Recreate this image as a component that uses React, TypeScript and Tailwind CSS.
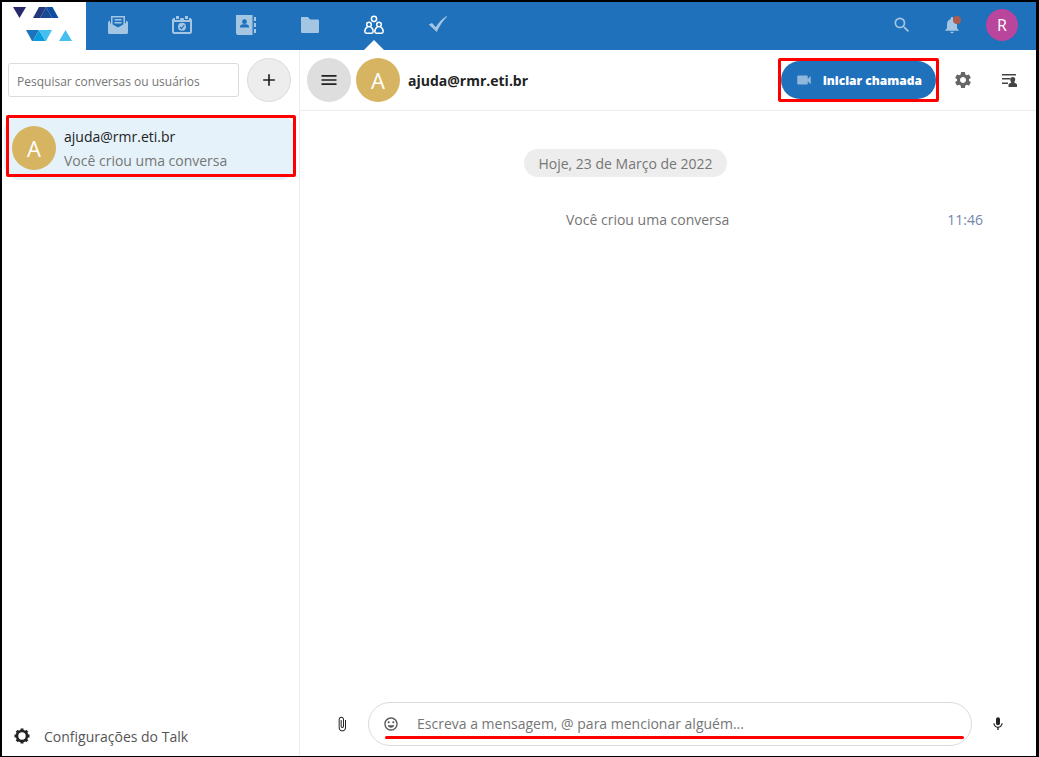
import type { ReactNode } from 'react';
import {
  MdAdd,
  MdAttachFile,
  MdInsertEmoticon,
  MdMenu,
  MdMic,
  MdNotifications,
  MdSearch,
  MdSettings,
  MdVideocam,
} from 'react-icons/md';

function Logo() {
  return (
    <svg viewBox="0 0 60 36" className="h-9 w-15" aria-hidden>
      <path d="M0 1h13L6.500 12z" fill="#27296d" />
      <path d="M26 1h7l-6 11h-7z" fill="#24387c" />
      <path d="M33 1l6 11H27z" fill="#1a4a94" />
      <path d="M33 1h6.500L45.500 12H39z" fill="#0c4da2" />
      <path d="M13 24h13l-6 11h-1z" fill="#1c75bc" />
      <path d="M26 24l6.500 11H20z" fill="#0a9bdc" />
      <path d="M26 24h13l-6 11h-.5z" fill="#45bff0" />
      <path d="M52.500 24L59 35H46z" fill="#45bff0" />
    </svg>
  );
}

function MailIcon() {
  return (
    <svg viewBox="0 0 20 20" className="size-5" fill="currentColor" aria-hidden>
      <path d="M3 1h14v9h-1.500V2.500h-11V10H3z" />
      <path d="M6.500 4h7v1.500h-7zM6.500 7h7v1.500h-7z" />
      <path d="M0 7l2-1.500V8l8 4.500L18 8V5.500L20 7v10.500a1.500 1.500 0 0 1-1.500 1.500h-17A1.500 1.500 0 0 1 0 17.500z" />
    </svg>
  );
}

function CalendarIcon() {
  return (
    <svg viewBox="0 0 20 20" className="size-5" fill="currentColor" aria-hidden>
      <path d="M4 1h3v3H4zM13 1h3v3h-3zM8.500 3h3v2h-3z" />
      <path
        fillRule="evenodd"
        d="M1.500 3H3v2h5V3.500h4V5h5V3h1.500L20 4.500v13L18.500 19h-17L0 17.500v-13zM2 7v10h16V7z"
      />
      <circle cx="10" cy="11.800" r="4" />
      <path d="M8 12l1.500 1.500L12.300 10" fill="none" stroke="#1e71ba" strokeWidth="1.200" />
    </svg>
  );
}

function ContactsIcon() {
  return (
    <svg viewBox="0 0 20 20" className="size-5" fill="currentColor" aria-hidden>
      <path
        fillRule="evenodd"
        d="M0 0h16v20H2a2 2 0 0 1-2-2zM8.500 4.200a2.400 2.400 0 1 0 0 4.900 2.400 2.400 0 0 0 0-4.900zM4 12.500h9v-1c0-1.500-1.500-2-3-2.300h-3c-1.500.3-3 .8-3 2.300z"
      />
      <path d="M16.500 0h.6v20h-.6zM18 2h2v4h-2zM18 8h2v4h-2zM18 14h2v4h-2z" />
    </svg>
  );
}

function FolderIcon() {
  return (
    <svg viewBox="0 0 20 20" className="size-5" fill="currentColor" aria-hidden>
      <path d="M1.500 2H8l2 2.500h8a1 1 0 0 1 1 1V17a1 1 0 0 1-1 1H2a1 1 0 0 1-1-1V2.500z" />
    </svg>
  );
}

function PeopleIcon() {
  return (
    <svg viewBox="0 0 20 20" className="size-5" fill="none" stroke="currentColor" strokeWidth="1.500" aria-hidden>
      <circle cx="10" cy="3.800" r="2.600" />
      <circle cx="5" cy="9.500" r="2.300" />
      <circle cx="15" cy="9.500" r="2.300" />
      <path d="M3.500 11.800C1.500 13 .8 14.500 .8 16.500c0 1.200.8 1.700 1.700 1.700h5c.9 0 1.700-.5 1.700-1.700 0-2-.7-3.500-2.700-4.700M13.500 11.800c-2 1.200-2.700 2.700-2.700 4.700 0 1.200.8 1.700 1.700 1.700h5c.9 0 1.700-.5 1.700-1.700 0-2-.7-3.500-2.700-4.700" />
    </svg>
  );
}

function CheckIcon() {
  return (
    <svg viewBox="0 0 20 20" className="size-5" fill="currentColor" aria-hidden>
      <path d="M.8 9.500L4 8l3.800 4.200C11 7 14 4 18.700 1L19 1.800C15 6 12 10 8.800 17z" />
    </svg>
  );
}

function ParticipantsIcon() {
  return (
    <svg viewBox="0 0 16 16" className="size-4" fill="currentColor" aria-hidden>
      <path d="M1 2h14v1.600H1zM1 6h8v1.600H1zM1 10.500h6v1.600H1z" />
      <path d="M11.700 5c1.800 0 2.700 1 2.500 2.800-.1 1.200-.7 1.800-.9 2.500 0 .8 2.400.9 2.700 2.200v2.500H7.500v-2.500c.3-1.300 2.700-1.400 2.700-2.200-.2-.7-.9-1.300-1-2.500C9 6 10 5 11.700 5z" />
    </svg>
  );
}

/** Cog with a wide centre hole, used for the sidebar footer. */
function CogIcon() {
  return (
    <svg viewBox="0 0 16 16" className="size-4" aria-hidden>
      <circle cx="8" cy="8" r="5" fill="none" stroke="currentColor" strokeWidth="2.600" />
      <path
        d="M8 .5v3M8 12.500v3M.5 8h3M12.500 8h3M2.700 2.700l2 2M11.300 11.300l2 2M13.300 2.700l-2 2M4.700 11.300l-2 2"
        fill="none"
        stroke="currentColor"
        strokeWidth="3"
      />
    </svg>
  );
}

const APPS: { label: string; icon: ReactNode; active?: boolean }[] = [
  { label: 'E-mail', icon: <MailIcon /> },
  { label: 'Calendário', icon: <CalendarIcon /> },
  { label: 'Contatos', icon: <ContactsIcon /> },
  { label: 'Arquivos', icon: <FolderIcon /> },
  { label: 'Talk', icon: <PeopleIcon />, active: true },
  { label: 'Tarefas', icon: <CheckIcon /> },
];

function TopBar() {
  return (
    <header className="flex h-12 shrink-0 bg-[#1e71ba]">
      <a href="#" aria-label="Início" className="flex w-21 justify-start bg-white pt-1 pl-[11px]">
        <Logo />
      </a>
      <nav className="flex flex-1">
        {APPS.map((app) => (
          <a
            key={app.label}
            href="#"
            aria-label={app.label}
            className={`relative flex w-16 justify-center pt-[13px] ${app.active ? 'text-white' : 'text-[#a5c6e3]'}`}
          >
            {app.icon}
            {app.active && (
              <span className="absolute bottom-0 left-1/2 -translate-x-1/2 border-x-10 border-b-10 border-x-transparent border-b-white" />
            )}
          </a>
        ))}
      </nav>
      <div className="flex items-start pr-[18px]">
        <button type="button" aria-label="Pesquisar" className="grid h-[46px] w-12 place-items-center text-[#a5c6e3]">
          <MdSearch size={20} />
        </button>
        <button type="button" aria-label="Notificações" className="relative grid h-[46px] w-13 place-items-center text-[#a5c6e3]">
          <MdNotifications size={20} />
          <span className="absolute top-3.5 right-[17px] size-2 rounded-full bg-[#ab5a4f]" />
        </button>
        <button
          type="button"
          aria-label="Conta"
          className="mt-[7px] ml-2 grid size-8 place-items-center rounded-full bg-[#b9469c] text-base text-white"
        >
          R
        </button>
      </div>
    </header>
  );
}

function Avatar() {
  return (
    <span className="grid size-11 shrink-0 place-items-center rounded-full bg-[#d6b461] text-[22px] leading-7 text-white">
      A
    </span>
  );
}

function Sidebar() {
  return (
    <aside className="flex w-[298px] shrink-0 flex-col border-r border-[#ededed]">
      <div className="flex items-center gap-2 px-1.5 pt-2 pr-2">
        <input
          type="text"
          aria-label="Pesquisar conversas ou usuários"
          placeholder="Pesquisar conversas ou usuários"
          className="h-[34px] min-w-0 flex-1 rounded-[3px] border border-[#dbdbdb] px-2 pt-0.5 text-xs text-[#222] placeholder:text-[#767676]"
        />
        <button
          type="button"
          aria-label="Nova conversa"
          className="grid size-11 place-items-center rounded-full border border-[#dbdbdb] bg-[#ededed] text-[#222]"
        >
          <MdAdd size={20} />
        </button>
      </div>
      <ul className="mt-3.5 pr-[3px] pl-0.5">
        <li className="relative">
          <a href="#" className="flex h-16 items-center gap-2 rounded-2xl bg-[#e5f2fa] px-2">
            <Avatar />
            <span className="flex flex-col pt-0.5 text-sm leading-6">
              <span className="text-[#222]">ajuda@rmr.eti.br</span>
              <span className="text-[#767676]">Você criou uma conversa</span>
            </span>
          </a>
          <span className="pointer-events-none absolute -top-px right-0 bottom-[3px] left-0.5 rounded-[2px] border-3 border-[#ff0000]" />
        </li>
      </ul>
      <button type="button" className="mt-auto flex h-10 items-center gap-3.5 pl-3 text-sm text-[#555]">
        <span className="text-[#222]">
          <CogIcon />
        </span>
        <span className="pt-0.5">Configurações do Talk</span>
      </button>
    </aside>
  );
}

function Conversation() {
  return (
    <main className="flex min-w-0 flex-1 flex-col">
      <div className="flex h-[61px] shrink-0 items-center border-b border-[#ededed] pr-[5px] pl-[7px]">
        <button type="button" aria-label="Menu" className="mr-[5px] grid size-11 place-items-center rounded-full bg-[#dedede] text-[#222]">
          <MdMenu size={20} />
        </button>
        <Avatar />
        <h1 className="ml-2 flex-1 pt-0.5 text-sm font-bold text-[#222]">ajuda@rmr.eti.br</h1>
        <div className="rounded-[2px] border-3 border-[#ff0000]">
          <button
            type="button"
            className="flex h-[38px] items-center gap-2.5 rounded-full bg-[#1e71ba] px-3.5 text-xs font-extrabold text-white"
          >
            <MdVideocam size={18} className="text-[#8eb8dc]" />
            <span className="pt-0.5">Iniciar chamada</span>
          </button>
        </div>
        <button type="button" aria-label="Configurações da conversa" className="ml-0.5 grid size-11 place-items-center text-[#666]">
          <MdSettings size={20} />
        </button>
        <button type="button" aria-label="Participantes" className="ml-0.5 grid size-11 place-items-center text-[#444]">
          <ParticipantsIcon />
        </button>
      </div>

      <div className="flex-1 text-sm text-[#767676]">
        <div className="mt-[38px] flex justify-center pr-[85px]">
          <span className="h-7 rounded-full bg-[#ededed] px-3.5 leading-[30px]">Hoje, 23 de Março de 2022</span>
        </div>
        <div className="mt-[31px] flex items-center pr-[53px] leading-6">
          <p className="flex-1 pl-12 text-center">Você criou uma conversa</p>
          <time className="text-[#7187a8]">11:46</time>
        </div>
      </div>

      <form className="flex items-center pr-4 pb-2.5 pl-5">
        <button type="button" aria-label="Anexar arquivo" className="grid size-11 place-items-center text-[#222]">
          <MdAttachFile size={16} />
        </button>
        <div className="relative ml-1 flex h-11 flex-1 items-center rounded-full border border-[#dbdbdb]">
          <button type="button" aria-label="Emoji" className="grid size-11 place-items-center text-[#555]">
            <MdInsertEmoticon size={16} />
          </button>
          <input
            type="text"
            aria-label="Mensagem"
            placeholder="Escreva a mensagem, @ para mencionar alguém..."
            className="mr-4 ml-1 min-w-0 flex-1 text-sm text-[#222] outline-none placeholder:text-[#767676]"
          />
          <span className="pointer-events-none absolute right-[7px] bottom-1.5 left-4 h-[3px] rounded-full bg-[#ff0000]" />
        </div>
        <button type="button" aria-label="Gravar áudio" className="ml-1 grid size-11 place-items-center text-[#222]">
          <MdMic size={16} />
        </button>
      </form>
    </main>
  );
}

export default function App() {
  return (
    <div className="flex h-screen flex-col border-2 border-r-3 border-b border-black bg-white font-['Open_Sans','Noto_Sans',sans-serif]">
      <TopBar />
      <div className="flex min-h-0 flex-1">
        <Sidebar />
        <Conversation />
      </div>
    </div>
  );
}
